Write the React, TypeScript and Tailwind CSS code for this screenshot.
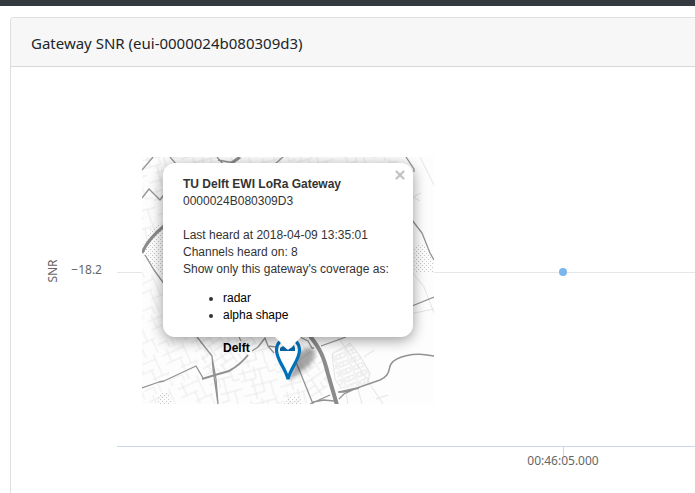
import { X } from 'lucide-react';

const mainRoads = [
  'M11 0L0 13',
  'M28 0L35 8',
  'M75 0L81 7M76 3L92 6M141 0L133 7',
  'M0 41L7 32L18 43L23 36',
  'M3 98L12 113L23 128',
  'M264 0L272 12V15',
  'M270 63L280 76L288 96L292 103',
  'M0 231L17 225L22 224L54 209L61 221',
  'M55 180L70 199L71 212L76 247M70 200L74 222L76 247',
  'M110 194L116 190L123 181L126 189L132 196M126 189L134 190',
  'M97 180L99 184',
  'M154 205L171 247',
  'M158 180L166 184L170 191L172 191',
  'M179 189L204 180M270 149L292 140',
  'M168 247L188 238M171 245L182 243L192 244',
  'M196 235L202 235L217 231M197 242L202 237L213 232',
];

const blocks = [
  { points: '0,0 80,0 80,10 22,10 22,66 0,92', fill: 'url(#streetsB)' },
  { points: '88,0 250,0 262,10 80,10', fill: 'url(#streetsB)' },
  { points: '0,108 22,130 22,180 54,180 68,201 54,208 0,229', fill: 'url(#streetsA)' },
  { points: '57,180 120,180 106,197 84,213 62,219', fill: 'url(#streetsC)' },
  { points: '0,233 54,211 60,223 76,222 76,247 0,247', fill: 'url(#streetsA)' },
  { points: '76,221 90,214 122,186 154,206 168,247 80,247', fill: 'url(#streetsB)' },
  { points: '160,186 182,206 190,236 170,241 154,206', fill: 'url(#streetsC)' },
  { points: '190,198 208,186 218,198 228,216 226,227 198,232', fill: 'url(#houses)' },
];

function MapTiles() {
  return (
    <svg className="block h-full w-full" viewBox="0 0 292 247" fill="none" aria-hidden="true">
      <defs>
        <pattern id="dots" width="4" height="4" patternUnits="userSpaceOnUse">
          <path d="M0 0h1v1H0zM2 2h1v1H2z" fill="#c8c8c8" />
        </pattern>
        <pattern id="streetsA" width="31" height="37" patternUnits="userSpaceOnUse" patternTransform="rotate(-24)">
          <path
            d="M0 5H23M0 14H18M12 23H31M6 0V14M15 14V37M23 0V23M28 23V37M0 30H10M10 30V37"
            stroke="#e9e9e9"
            strokeWidth="0.9"
          />
        </pattern>
        <pattern id="streetsB" width="37" height="33" patternUnits="userSpaceOnUse" patternTransform="rotate(-15)">
          <path
            d="M0 4H29M0 12H16M9 19H37M0 27H22M5 0V12M12 12V33M21 4V27M29 19V33M16 0V12M30 0V9H37"
            stroke="#e6e6e6"
            strokeWidth="0.9"
          />
        </pattern>
        <pattern id="streetsC" width="26" height="23" patternUnits="userSpaceOnUse" patternTransform="rotate(-34)">
          <path d="M0 3H26M0 10H16M4 17H26M7 0V10M16 3V23M22 10V17M2 10V23" stroke="#e4e4e4" strokeWidth="0.9" />
        </pattern>
        <pattern id="houses" width="13" height="8" patternUnits="userSpaceOnUse" patternTransform="rotate(-22)">
          <path d="M1 1H10V5H1ZM5 1V5M12 0V8" stroke="#e0e0e0" strokeWidth="0.8" />
        </pattern>
        <filter id="soft" x="-50%" y="-50%" width="200%" height="200%">
          <feGaussianBlur stdDeviation="2" />
        </filter>
      </defs>

      <rect width="292" height="247" fill="#fdfdfd" />
      {blocks.map((block) => (
        <polygon key={block.points} points={block.points} fill={block.fill} />
      ))}
      <path
        d="M2 90L8 72L21 66V118L12 112L2 98ZM270 92L280 86L288 98L292 106V116H270ZM16 247L16 240L20 236H27L30 247ZM142 247L146 240H158L159 247Z"
        fill="url(#dots)"
      />
      <path
        d="M278 0L292 28M271 40L279 36M271 40L278 44M270 115L282 130L292 156M258 159L292 152M196 180L218 212L241 247M190 197L208 186L218 199L228 216L226 226M190 197L193 222L199 231M222 200L232 193M204 236L206 247M216 232L220 247M234 242L246 238"
        stroke="#e4e4e4"
      />

      <g stroke="#929292" strokeWidth="1.3" strokeLinejoin="round">
        {mainRoads.map((d) => (
          <path key={d} d={d} />
        ))}
      </g>
      <path d="M60 222L73 218L87 214Q98 208 106 198" stroke="#929292" strokeWidth="2" />
      <path
        d="M292 199L285 198C272 196 254 199 249 207C246 212 249 218 238 223L215 231L197 235"
        stroke="#929292"
        strokeWidth="1.5"
      />
      <path d="M0 96Q6 82 22 69M98 0L87 8" stroke="#8b8b8b" strokeWidth="3" />
      <path d="M168 179C179 193 182 201 186 217L195 248" stroke="#8b8b8b" strokeWidth="4" />

      <path d="M147 224L154 196L168 190Q178 193 168 208Z" fill="#000" opacity="0.35" filter="url(#soft)" />
      <path
        d="M146 222C143 210 134.500 203 134.500 193A11.500 12 0 0 1 157.500 193C157.500 203 149 210 146 222Z"
        fill="#fff"
        stroke="#0072bc"
        strokeWidth="3.2"
      />
      <path d="M138 194V191L141 189L145 192L149 191L152 188L153 191V194Z" fill="#0864a5" />
    </svg>
  );
}

function GatewayMap() {
  return (
    <div className="absolute top-[90px] left-[131px] h-[247px] w-[292px] overflow-hidden font-['Liberation_Sans',Arial,sans-serif] text-xs text-[#333]">
      <MapTiles />
      <span className="absolute top-[183px] left-[81px] leading-4 font-bold text-black">Delft</span>

      <div className="absolute top-1.5 left-[21px] w-[250px]">
        <div className="rounded-xl bg-white px-5 py-[13px] leading-[17px] shadow-[0_3px_14px_rgba(0,0,0,0.4)]">
          <h3 className="font-bold">TU Delft EWI LoRa Gateway</h3>
          <p>0000024B080309D3</p>
          <p className="mt-[17px]">Last heard at 2018-04-09 13:35:01</p>
          <p>Channels heard on: 8</p>
          <p className="whitespace-nowrap">Show only this gateway's coverage as:</p>
          <ul className="mt-3 list-disc pl-10">
            <li>
              <a href="#radar" className="text-black">radar</a>
            </li>
            <li>
              <a href="#alpha-shape" className="text-black">alpha shape</a>
            </li>
          </ul>
        </div>
        <button
          type="button"
          aria-label="Close popup"
          className="absolute top-1 right-1 flex h-4 w-[18px] items-center justify-center text-[#c3c3c3]"
        >
          <X size={14} strokeWidth={4} />
        </button>
        <svg className="absolute top-full left-[105px] h-5 w-10" viewBox="0 0 40 20" aria-hidden="true">
          <path d="M7 0H33L20 13Z" fill="#fff" />
        </svg>
      </div>
    </div>
  );
}

function SnrChart() {
  return (
    <svg
      className="block h-[426px] w-full font-['Noto_Sans','Open_Sans',sans-serif] text-xs"
      fill="#666"
      role="img"
      aria-label="Gateway SNR"
    >
      <g shapeRendering="crispEdges">
        <rect x="106" y="205" width="100%" height="1" fill="#e6e6e6" />
        <rect x="106" y="379" width="100%" height="1" fill="#ccd6eb" />
        <rect x="552" y="379" width="1" height="10" fill="#ccd6eb" />
      </g>
      <circle cx="552" cy="205" r="4" fill="#7cb5ec" />
      <text x="91" y="207" textAnchor="end">−18.2</text>
      <text x="552" y="398" textAnchor="middle">00:46:05.000</text>
      <text transform="translate(46 204) rotate(-90)" textAnchor="middle">SNR</text>
    </svg>
  );
}

export default function App() {
  return (
    <div className="flex h-screen flex-col overflow-hidden bg-white">
      <div className="h-1.5 shrink-0 bg-[#343a40]" />
      <section className="mt-[11px] ml-2.5 flex-1 rounded-tl border-t border-l border-[#dfdfdf]">
        <header className="rounded-tl border-b border-[#d8d8d8] bg-[#f7f7f7] px-5 pt-[13px] pb-[11px]">
          <h2 className="font-['Noto_Sans','Open_Sans',sans-serif] text-[15px] leading-6 text-[#212529]">
            Gateway SNR (eui-0000024b080309d3)
          </h2>
        </header>
        <div className="relative">
          <SnrChart />
          <GatewayMap />
        </div>
      </section>
    </div>
  );
}
